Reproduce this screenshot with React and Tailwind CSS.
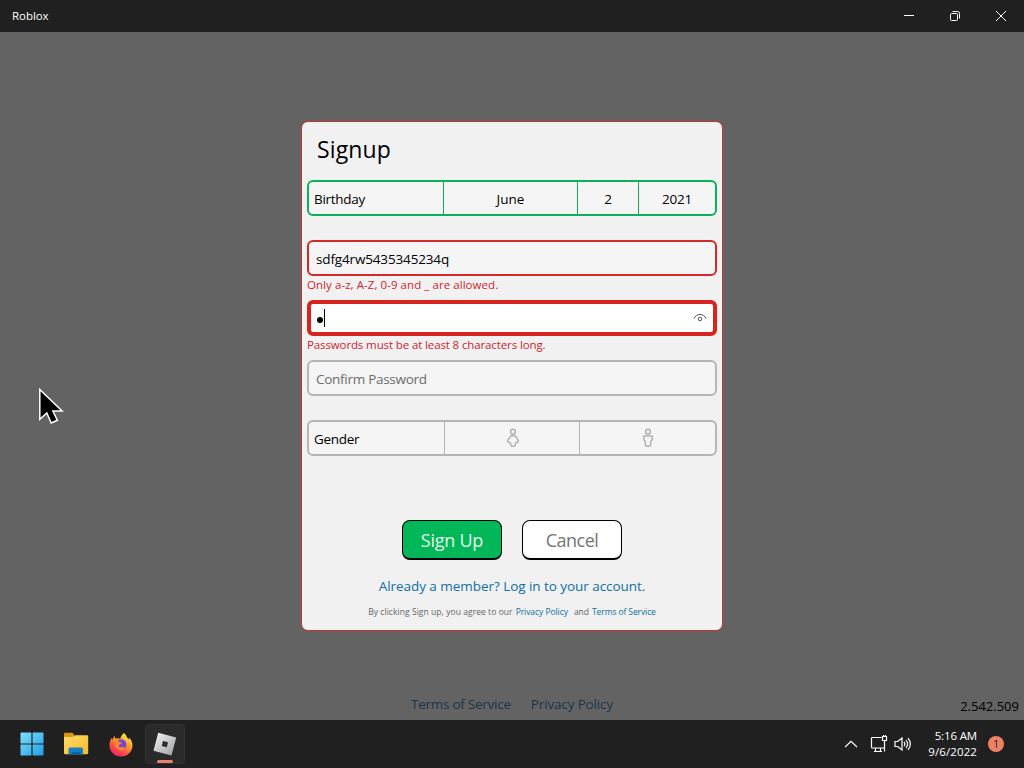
const FONT = "font-['Open_Sans','Noto_Sans',sans-serif]";

function TitleBar() {
  return (
    <header className="flex h-8 shrink-0 items-center bg-[#202020] pl-3 text-white">
      <span className="flex-1 text-[11.5px] tracking-[-0.05px]">Roblox</span>
      <div className="flex w-[46px] justify-center">
        <svg width="12" height="12" viewBox="0 0 12 12" stroke="currentColor">
          <path d="M1 5.5h10" />
        </svg>
      </div>
      <div className="flex w-[46px] justify-center">
        <svg width="12" height="12" viewBox="0 0 12 12" fill="none" stroke="currentColor">
          <rect x="1.5" y="3.5" width="7" height="7" rx="1" />
          <path d="M3.5 1.5h5a2 2 0 0 1 2 2v5" />
        </svg>
      </div>
      <div className="flex w-[46px] justify-center">
        <svg width="12" height="12" viewBox="0 0 12 12" fill="none" stroke="currentColor">
          <path d="M1 1l10 10M11 1L1 11" />
        </svg>
      </div>
    </header>
  );
}

function FemaleIcon() {
  return (
    <svg className="ml-px" width="14" height="20" viewBox="0 0 14 20" fill="none" stroke="#b2b2b2" strokeWidth="1.5" strokeLinejoin="round">
      <circle cx="7" cy="3.7" r="2.4" />
      <path d="M4.8 7.8h4.400L12.400 12.600l-.6 1.600-1.900.3-.8 2.800-.9 1H5.800l-.9-1-.8-2.800-1.900-.3-.6-1.600z" />
    </svg>
  );
}

function MaleIcon() {
  return (
    <svg width="14" height="20" viewBox="0 0 14 20" fill="none" stroke="#b2b2b2" strokeWidth="1.5" strokeLinejoin="round">
      <circle cx="7" cy="3.7" r="2.4" />
      <path d="M2.800 8h8.400v3.800l-1.500 1.800v3.700l-1 1H5.300l-1-1v-3.700l-1.500-1.800z" />
    </svg>
  );
}

function EyeIcon() {
  return (
    <svg width="14" height="10" viewBox="0 0 14 10" fill="none" stroke="#555">
      <path d="M1 5.5C2 3 4.3 1.500 7 1.500S12 3 13 5.500" />
      <circle cx="7" cy="6" r="1.8" />
    </svg>
  );
}

function FieldError({ children }) {
  return <p className="h-6 text-[11.5px] leading-[18px] text-[#cf2530]">{children}</p>;
}

function SignupDialog() {
  return (
    <section className="mt-[89px] flex h-[510px] w-[422px] flex-col rounded-[7px] border border-[#c5322e] bg-[#f1f1f1] px-[5px] text-[13.5px] text-black">
      <h1 className="h-[58px] pl-[10px] text-[23px] leading-[54px] tracking-[0.15px]">Signup</h1>

      <div className="flex h-9 shrink-0 items-stretch overflow-hidden rounded-md border-2 border-[#0cb05c] bg-[#f5f5f5] leading-[34px]">
        <div className="w-[135px] border-r border-[#0cb05c] pl-[5px] tracking-[-0.3px]">Birthday</div>
        <div className="w-[134px] border-r border-[#0cb05c] text-center">June</div>
        <div className="w-[61px] border-r border-[#0cb05c] text-center">2</div>
        <div className="flex-1 text-center tracking-[-0.2px]">2021</div>
      </div>

      <div className="mt-6 h-9 shrink-0 rounded-md border-2 border-[#d3292a] bg-[#f5f5f5] pl-[7px] leading-[34px] tracking-[-0.15px]">
        sdfg4rw5435345234q
      </div>
      <FieldError>
        <span className="tracking-[0.06px]">Only a-z, A-Z, 0-9 and _ are allowed.</span>
      </FieldError>

      <div className="flex h-9 shrink-0 items-center rounded-md border-4 border-[#d6251f] bg-white pl-[6px] pr-[6px]">
        <span className="mt-[3px] size-[6px] rounded-full bg-black" />
        <span className="ml-px h-[18px] w-px bg-black" />
        <span className="flex-1" />
        <EyeIcon />
      </div>
      <FieldError>
        <span className="tracking-[-0.12px]">Passwords must be at least 8 characters long.</span>
      </FieldError>

      <div className="h-9 shrink-0 rounded-md border-2 border-[#b5b5b5] bg-[#f5f5f5] pl-[7px] leading-[34px] tracking-[-0.28px] text-[#6b6b6b]">
        Confirm Password
      </div>

      <div className="mt-6 flex h-9 shrink-0 items-stretch overflow-hidden rounded-md border-2 border-[#b5b5b5] bg-[#f5f5f5]">
        <div className="w-[136px] border-r border-[#b5b5b5] pl-[5px] leading-[34px] tracking-[-0.3px]">Gender</div>
        <div className="flex w-[135px] items-center justify-center border-r border-[#b5b5b5]">
          <FemaleIcon />
        </div>
        <div className="flex flex-1 items-center justify-center">
          <MaleIcon />
        </div>
      </div>

      <div className="mt-16 flex justify-center gap-5 text-[18px] leading-[38px]">
        <button className="h-10 w-[100px] rounded-lg border border-b-2 border-black bg-[#02b757] tracking-[-0.25px] text-[#e4f8ec]">Sign Up</button>
        <button className="h-10 w-[100px] rounded-lg border border-b-2 border-black bg-white tracking-[-0.5px] text-[#757575]">Cancel</button>
      </div>

      <a className="mt-4 text-center text-[13.5px] leading-[21px] tracking-[-0.05px] text-[#0f6fa3]">
        Already a member? Log in to your account.
      </a>
      <p className="mt-2 flex justify-center whitespace-nowrap text-[8.5px] leading-[14px] text-[#666]">
        <span className="tracking-[0.06px]">By clicking Sign up, you agree to our</span>
        <a className="ml-[3px] tracking-[-0.06px] text-[#0f6fa3]">Privacy Policy</a>
        <span className="ml-[6px]">and</span>
        <a className="ml-[3px] tracking-[-0.1px] text-[#0f6fa3]">Terms of Service</a>
      </p>
    </section>
  );
}

function Cursor() {
  return (
    <svg className="absolute left-[38px] top-[387px]" width="26" height="38" viewBox="0 0 26 38">
      <path d="M1.8 2.500v29.800l7-6.300 4.400 10 6.200-2.700-4.500-9.300h9.200z" fill="#000" stroke="#fff" strokeWidth="1.5" />
    </svg>
  );
}

function WindowsLogo() {
  return (
    <svg width="24" height="24" viewBox="0 0 24 24">
      <defs>
        <linearGradient id="win" x1="0" y1="0" x2="1" y2="1">
          <stop offset="0" stopColor="#7fe0fb" />
          <stop offset="1" stopColor="#1e9fe8" />
        </linearGradient>
      </defs>
      <path
        fill="url(#win)"
        d="M1.5.5h9.900v10.900H.5V1.500a1 1 0 0 1 1-1zM12.600.5h9.900a1 1 0 0 1 1 1v9.900H12.600zM.5 12.600h10.900v10.900H1.500a1 1 0 0 1-1-1zM12.600 12.600h10.900v9.900a1 1 0 0 1-1 1h-9.900z"
      />
    </svg>
  );
}

function FolderIcon() {
  return (
    <svg width="26" height="24" viewBox="0 0 26 24">
      <defs>
        <linearGradient id="folder" x1="0" y1="0" x2="1" y2="1">
          <stop offset="0" stopColor="#ffdc69" />
          <stop offset="1" stopColor="#f7b92b" />
        </linearGradient>
      </defs>
      <path d="M2 .8h7.500L12 4v2H1V1.800q0-1 1-1z" fill="#dc9516" />
      <path d="M1 5h8.500l3-1.700H24q1.200 0 1.200 1.200V21q0 1.300-1.300 1.300H2.300Q1 22.300 1 21z" fill="url(#folder)" />
      <path d="M5.500 22.300V17q0-1.500 1.500-1.500h11.500q1.500 0 1.500 1.500v5.300z" fill="#157fc4" />
      <path d="M8.500 22.300v-2h9v2z" fill="#0b5f9d" />
    </svg>
  );
}

function FirefoxIcon() {
  return (
    <svg width="24" height="25" viewBox="0 0 24 25">
      <defs>
        <linearGradient id="fox" x1=".8" y1="0" x2=".2" y2="1">
          <stop offset="0" stopColor="#fff044" />
          <stop offset=".4" stopColor="#ff9a28" />
          <stop offset=".75" stopColor="#ff4050" />
          <stop offset="1" stopColor="#e52474" />
        </linearGradient>
      </defs>
      <path
        fill="url(#fox)"
        d="M15 1c2 1.500 2.600 3 3 4.500.8.400 1.500 1.200 1.800 2l.6-1.500C22.700 8.500 23.500 10.800 23.500 13.300A11.500 11.300 0 0 1 .5 13.300c0-3 .8-5.600 2.400-7.600L3 8l2.700-4.200.5 2.700c2-.6 3.700-.4 5.100.5C11.500 4.500 13 2.500 15 1z"
      />
      <circle cx="12.3" cy="12.5" r="5.2" fill="#7b45d6" />
      <path d="M5 9.500c2.200-1.200 4.300-.6 6.300.8l1.500.5c-.3 1.400-2.100 1.300-3 2.400-.6 1.800 1.300 2.600 3.100 2 2-.5 3 .3 2.500 1.300-1 2-5.500 2.500-7.900-.4C5.800 14 4.800 12 5 9.500z" fill="#ff8726" />
      <path d="M14.500 3c2.500 2.500 4.700 5.500 4.300 9.500-.2-2.500-1.800-4.300-4-5.500z" fill="#ffd43c" />
    </svg>
  );
}

function RobloxIcon() {
  return (
    <svg width="24" height="24" viewBox="0 0 24 24">
      <defs>
        <linearGradient id="rbx" x1="0" y1="0" x2="1" y2="1">
          <stop offset="0" stopColor="#f5f5f5" />
          <stop offset="1" stopColor="#999da1" />
        </linearGradient>
      </defs>
      <path fill="url(#rbx)" fillRule="evenodd" d="M5.200.8l18 4.800-4.700 18L.5 18.800zM10 9l-1.200 4.900 5 1.300 1.200-4.900z" />
    </svg>
  );
}

function Taskbar() {
  return (
    <footer className="flex h-12 shrink-0 items-center bg-[#202020] text-white">
      <div className="ml-5 flex w-6 justify-center">
        <WindowsLogo />
      </div>
      <div className="ml-[19px] flex w-[26px] justify-center">
        <FolderIcon />
      </div>
      <div className="ml-5 flex w-6 justify-center">
        <FirefoxIcon />
      </div>
      <div className="relative ml-3 flex h-10 w-10 items-center justify-center rounded border border-[#313131] bg-[#2a2a2a]">
        <RobloxIcon />
        <span className="absolute bottom-0 left-[11px] h-[3px] w-4 rounded-full bg-[#ee8070]" />
      </div>

      <div className="ml-auto flex items-center">
        <svg width="14" height="8" viewBox="0 0 14 8" fill="none" stroke="currentColor" strokeWidth="1.2">
          <path d="M1 7l6-5.700L13 7" />
        </svg>
        <svg className="ml-[12px]" width="18" height="18" viewBox="0 0 18 18" fill="none" stroke="currentColor" strokeWidth="1.2">
          <path d="M11.500 2.500H2.300q-.8 0-.8.800v8.900q0 .8.800.8h12.200M5.500 13v3.300M10.500 13v3.300M4 16.500h8" />
          <path d="M12.500 1.500h4v4h-4zM14.500 5.500v11M13.500 1.500V0M15.500 1.500V0" />
        </svg>
        <svg className="ml-[6px]" width="18" height="16" viewBox="0 0 18 16" fill="none" stroke="currentColor" strokeWidth="1.2">
          <path d="M1 5.500h2.700L8 2v12l-4.300-3.500H1zM10 5.800q1.700 2.200 0 4.400M12 4q3.200 4 0 8M14 2.200q4.700 5.800 0 11.600" />
        </svg>
        <div className="ml-[15px] w-[50px] whitespace-nowrap text-right text-[11.5px] leading-4">
          <p className="tracking-[-0.15px]">5:16 AM</p>
          <p className="tracking-[0.1px]">9/6/2022</p>
        </div>
        <span className="ml-[11px] mr-5 size-4 rounded-full bg-[#ee8067] text-center text-[10px] leading-4 text-[#202020]">1</span>
      </div>
    </footer>
  );
}

export default function App() {
  return (
    <div className={`relative flex h-screen flex-col overflow-hidden bg-[#636363] ${FONT}`}>
      <TitleBar />
      <main className="flex flex-1 flex-col items-center">
        <SignupDialog />
        <div className="mt-auto grid w-full grid-cols-[1fr_auto_1fr] items-end">
          <span />
          <nav className="flex gap-5 pb-[6px] text-[13.5px] leading-5 text-[#17364a]">
            <a className="tracking-[-0.25px]">Terms of Service</a>
            <a className="tracking-[-0.15px]">Privacy Policy</a>
          </nav>
          <span className="pb-1 pr-[5px] text-right text-[13px] leading-5 text-black">2.542.509</span>
        </div>
      </main>
      <Taskbar />
      <Cursor />
    </div>
  );
}
